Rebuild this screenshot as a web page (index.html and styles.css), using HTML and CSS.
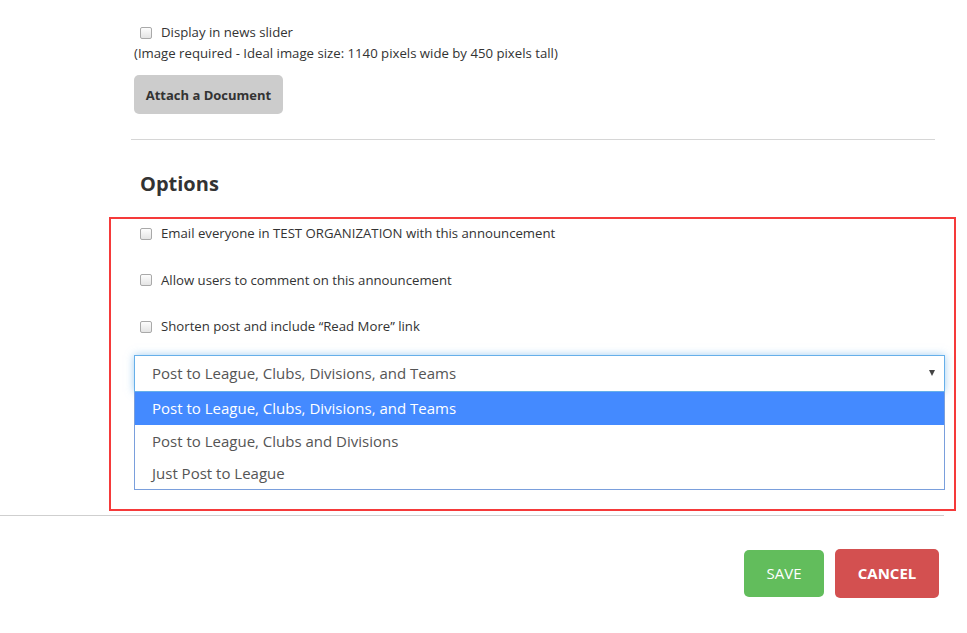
FILE: index.html
```html
<!DOCTYPE html>
<html lang="en">
<head>
<meta charset="UTF-8">
<title>Announcement Options</title>
<link rel="stylesheet" href="styles.css">
</head>
<body>
<div class="page">
  <div class="form">
    <div class="form-group">
      <label class="check-row"><input type="checkbox" class="check">Display in news slider</label>
      <p class="help">(Image required - Ideal image size: 1140 pixels wide by 450 pixels tall)</p>
      <button class="btn-attach">Attach a Document</button>
    </div>

    <hr class="divider">

    <h3 class="section-title">Options</h3>

    <div class="options">
      <label class="check-row opt"><input type="checkbox" class="check">Email everyone in TEST ORGANIZATION with this announcement</label>
      <label class="check-row opt"><input type="checkbox" class="check">Allow users to comment on this announcement</label>
      <label class="check-row opt"><input type="checkbox" class="check">Shorten post and include “Read More” link</label>

      <div class="select">
        <div class="select-box">
          <span>Post to League, Clubs, Divisions, and Teams</span>
          <span class="arrow"></span>
        </div>
        <ul class="select-list">
          <li class="selected">Post to League, Clubs, Divisions, and Teams</li>
          <li>Post to League, Clubs and Divisions</li>
          <li>Just Post to League</li>
        </ul>
      </div>
    </div>
  </div>

  <hr class="footer-line">

  <div class="actions">
    <button class="btn btn-save">SAVE</button>
    <button class="btn btn-cancel">CANCEL</button>
  </div>
</div>
</body>
</html>
```

FILE: styles.css
```css
body {
  margin: 0;
  font-family: "Open Sans", Arial, sans-serif;
  color: #333;
  background: #fff;
}

.page {
  width: 944px;
  padding-top: 22px;
}

.form {
  padding: 0 9px 0 131px;
}

.form-group {
  padding-left: 3px;
}

.check-row {
  display: flex;
  align-items: center;
  font-size: 13.2px;
  line-height: 20px;
  padding-left: 6px;
}

.check {
  appearance: none;
  -webkit-appearance: none;
  width: 12px;
  height: 12px;
  margin: 1px 9px 0 0;
  border: 1px solid #a9a9a9;
  border-radius: 2px;
  background: linear-gradient(#fdfdfd, #e4e4e4);
  box-sizing: border-box;
}

.help {
  margin: 1px 0 0;
  font-size: 13.2px;
  line-height: 20px;
}

.btn-attach {
  margin-top: 12px;
  width: 149px;
  height: 39px;
  border: none;
  border-radius: 5px;
  background: #cccccc;
  color: #333;
  font-family: inherit;
  font-weight: bold;
  font-size: 13px;
}

.divider {
  margin: 25px 0 0;
  border: none;
  border-top: 1px solid #d6d6d6;
}

.section-title {
  margin: 31px 0 0 9px;
  font-size: 20px;
  line-height: 26px;
  font-weight: bold;
}

/* annotation box around the options */
.options {
  position: relative;
  margin-top: 21px;
  padding: 5px 0 20px 3px;
}

.options::after {
  content: "";
  position: absolute;
  top: -1px;
  left: -22px;
  right: -21px;
  bottom: -1px;
  border: 2px solid #f53a3a;
  pointer-events: none;
}

.opt {
  margin-bottom: 26.5px;
}

.select {
  margin-top: -8px;
  margin-right: -10px;
}

.select-box {
  display: flex;
  align-items: center;
  justify-content: space-between;
  height: 35px;
  padding: 0 9px 0 17px;
  border: 1px solid #66afe9;
  box-shadow: 0 0 8px rgba(102, 175, 233, 0.6);
  font-size: 15px;
  color: #555;
}

.arrow {
  width: 0;
  height: 0;
  border-left: 3.5px solid transparent;
  border-right: 3.5px solid transparent;
  border-top: 6px solid #444;
}

.select-list {
  list-style: none;
  margin: 0;
  padding: 0;
  border: 1px solid #7a9fdc;
  border-top: none;
  font-size: 15px;
  color: #555;
}

.select-list li {
  height: 32px;
  line-height: 32px;
  padding-left: 17px;
}

.select-list li.selected {
  height: 33px;
  line-height: 33px;
  background: #448aff;
  color: #fff;
}

.footer-line {
  margin: 5px 0 0;
  border: none;
  border-top: 1px solid #cfcfcf;
}

.actions {
  display: flex;
  justify-content: flex-end;
  align-items: center;
  gap: 11px;
  margin-top: 33px;
  padding-right: 5px;
}

.btn {
  border: none;
  border-radius: 5px;
  color: #fff;
  font-family: inherit;
  font-size: 15px;
}

.btn-save {
  width: 80px;
  height: 47px;
  background: #62bd5c;
}

.btn-cancel {
  width: 104px;
  height: 49px;
  background: #d35050;
  font-weight: bold;
}
```
